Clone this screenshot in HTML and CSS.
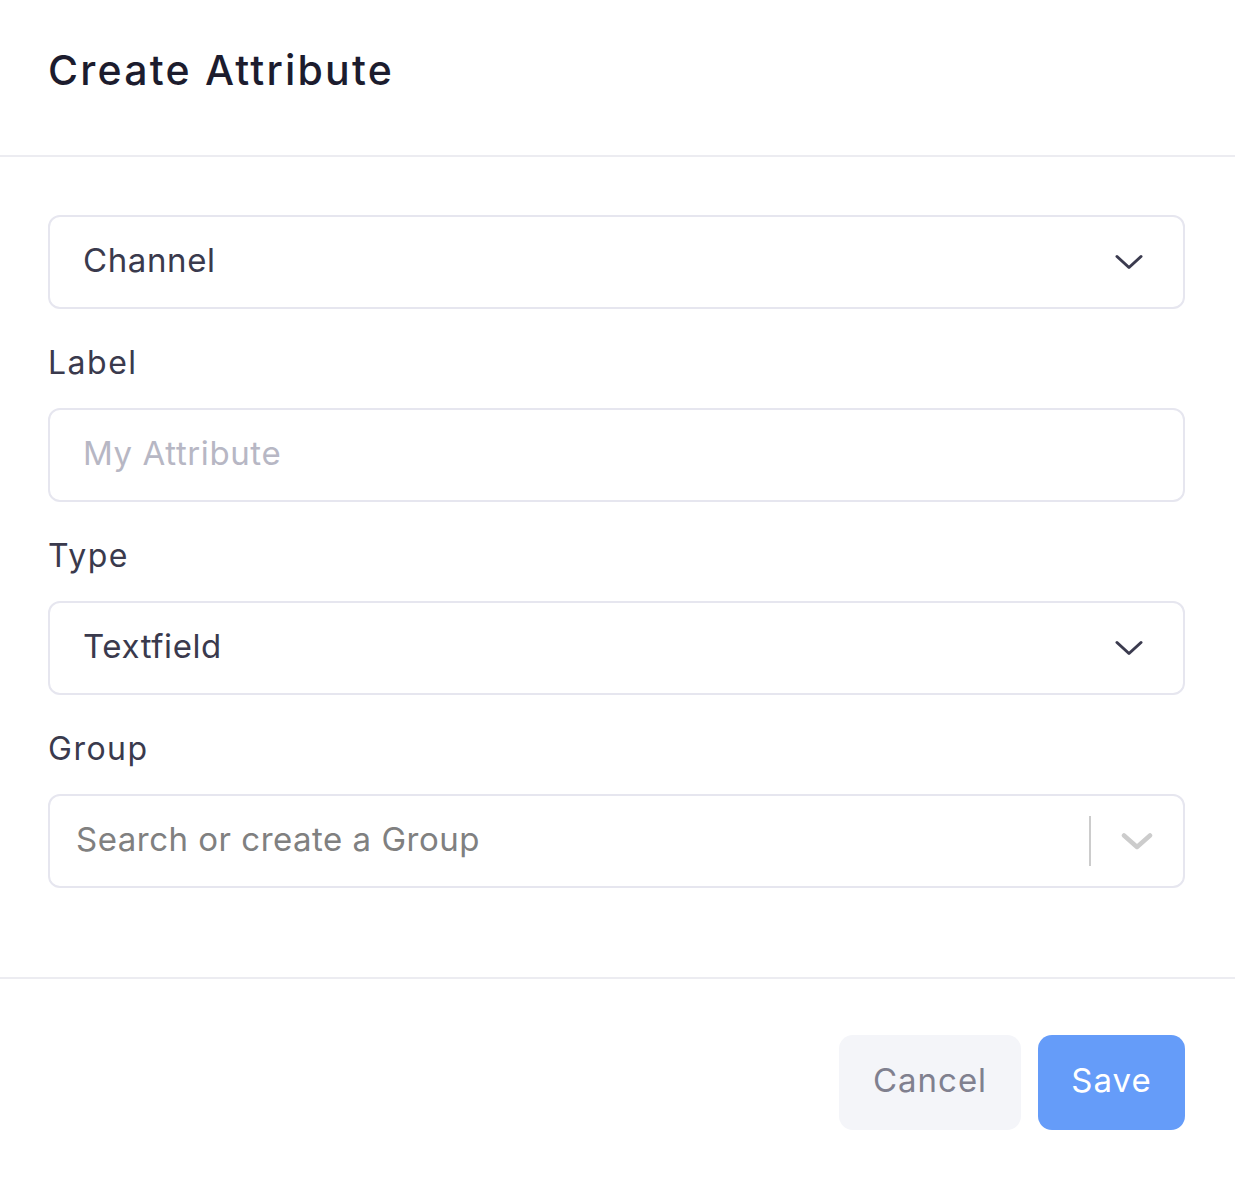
FILE: index.html
```html
<!DOCTYPE html>
<html lang="en">
<head>
<meta charset="utf-8">
<title>Create Attribute</title>
<link rel="stylesheet" href="styles.css">
</head>
<body>
<div class="modal">
  <header class="modal-header">
    <h1 class="title">Create Attribute</h1>
  </header>
  <main class="modal-body">
    <div class="box select">
      <span class="value">Channel</span>
      <svg class="chev" width="28" height="16" viewBox="0 0 28 16"><path d="M2 2.5 L14 13.5 L26 2.5" fill="none" stroke="#3b3b4f" stroke-width="3" stroke-linecap="round" stroke-linejoin="round"/></svg>
    </div>
    <label class="field-label">Label</label>
    <div class="box input">
      <span class="placeholder">My Attribute</span>
    </div>
    <label class="field-label">Type</label>
    <div class="box select">
      <span class="value">Textfield</span>
      <svg class="chev" width="28" height="16" viewBox="0 0 28 16"><path d="M2 2.5 L14 13.5 L26 2.5" fill="none" stroke="#3b3b4f" stroke-width="3" stroke-linecap="round" stroke-linejoin="round"/></svg>
    </div>
    <label class="field-label">Group</label>
    <div class="box combo">
      <span class="combo-placeholder">Search or create a Group</span>
      <div class="indicators">
        <span class="sep"></span>
        <svg class="chev-light" width="32" height="18" viewBox="0 0 32 18"><path d="M3 3.5 L16 15 L29 3.5" fill="none" stroke="#cccccc" stroke-width="4.5" stroke-linecap="round" stroke-linejoin="round"/></svg>
      </div>
    </div>
  </main>
  <footer class="modal-footer">
    <button class="btn btn-cancel">Cancel</button>
    <button class="btn btn-save">Save</button>
  </footer>
</div>
</body>
</html>
```

FILE: styles.css
```css
* { box-sizing: border-box; }
html, body { margin: 0; padding: 0; background: #ffffff; }
body {
  font-family: "Inter", "Lato", "Liberation Sans", sans-serif;
  color: #3a3a4d;
}
.modal { width: 1235px; min-height: 1177px; background: #fff; }
.modal-header {
  height: 157px;
  padding: 0 48px;
  display: flex;
  align-items: center;
  border-bottom: 2px solid #ececf1;
}
.title {
  margin: 0;
  margin-top: -16px;
  font-size: 41px;
  font-weight: 500;
  letter-spacing: 2.2px;
  color: #1c1c2e;
}
.modal-body {
  padding: 58px 50px 89px 48px;
  display: flex;
  flex-direction: column;
}
.box {
  height: 94px;
  border: 2px solid #e6e6ef;
  border-radius: 12px;
  display: flex;
  align-items: center;
  background: #fff;
}
.select, .input { padding: 0 40px 0 33px; justify-content: space-between; }
.value, .placeholder, .combo-placeholder {
  font-size: 33px;
  letter-spacing: 0.6px;
  margin-top: -4px;
}
.value { color: #3a3a4d; }
.placeholder { color: #b7b7c4; }
.combo-placeholder { color: #808080; letter-spacing: 0.5px; }
.field-label {
  margin-top: 32px;
  margin-bottom: 19px;
  height: 48px;
  line-height: 44px;
  font-size: 32px;
  letter-spacing: 1.5px;
  color: #3a3a4d;
}
.combo { padding: 0 0 0 26px; justify-content: space-between; }
.indicators { display: flex; align-items: center; height: 100%; }
.sep { width: 2px; height: 50px; background: #cccccc; margin-right: 30px; }
.chev-light { margin-right: 30px; }
.modal-footer {
  border-top: 2px solid #ececf1;
  padding: 56px 50px 0 48px;
  display: flex;
  justify-content: flex-end;
  gap: 17px;
}
.btn {
  height: 95px;
  border: none;
  border-radius: 14px;
  font-family: inherit;
  font-size: 33px;
  letter-spacing: 1px;
  padding: 0 0 6px 0;
  cursor: pointer;
}
.btn-cancel { width: 182px; background: #f4f5f9; color: #80808f; }
.btn-save { width: 147px; background: #659cf9; color: #ffffff; }
```
